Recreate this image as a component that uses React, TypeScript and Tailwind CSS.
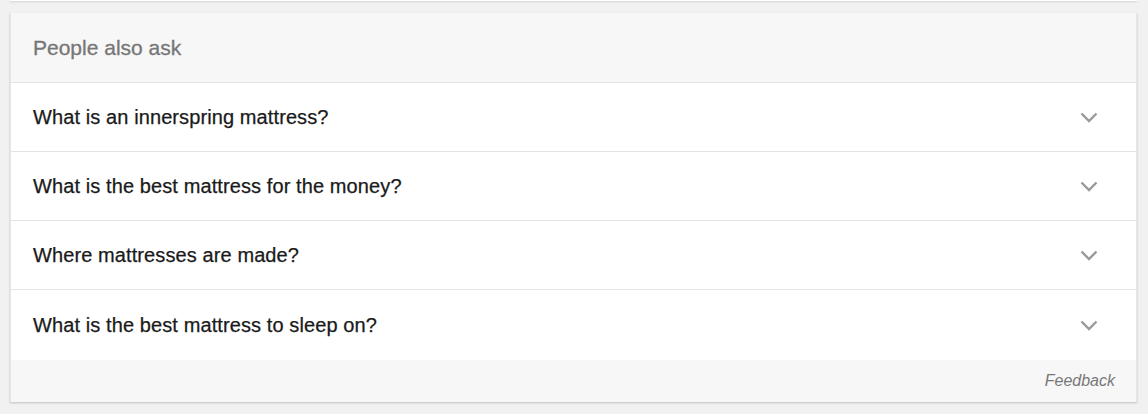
import React from "react";

const questions = [
  "What is an innerspring mattress?",
  "What is the best mattress for the money?",
  "Where mattresses are made?",
  "What is the best mattress to sleep on?",
];

function Chevron() {
  return (
    <svg width="18" height="11" viewBox="0 0 18 11" fill="none" className="shrink-0">
      <path d="M1.5 1.5 L9 9 L16.5 1.5" stroke="#999" strokeWidth="2.4" strokeLinecap="butt" strokeLinejoin="miter" />
    </svg>
  );
}

export default function App() {
  return (
    <div
      className="w-[1148px] h-[414px] bg-[#f1f1f1] pl-[10px] pr-[11px] overflow-hidden"
      style={{ fontFamily: '"Liberation Sans", Arial, sans-serif' }}
    >
      <div className="h-[1px] bg-white shadow-[0_1px_2px_rgba(0,0,0,0.18)]" />
      <div className="mt-[12px] bg-white shadow-[0_1px_2px_rgba(0,0,0,0.2)] border-l border-r border-[#e6e6e6]">
        <div className="h-[70px] bg-[#f7f7f7] border-b border-[#e3e3e3] pl-[22px] flex items-center">
          <span className="text-[21px] text-[#767676] leading-none [-webkit-text-stroke:0.3px_#767676]">
            People also ask
          </span>
        </div>
        {questions.map((q, i) => (
          <div
            key={q}
            className={
              i < questions.length - 1
                ? "h-[69px] border-b border-[#e3e3e3] pl-[22px] pr-[38px] flex items-center justify-between"
                : "h-[70px] pl-[22px] pr-[38px] flex items-center justify-between"
            }
          >
            <span className="text-[20px] tracking-[0.1px] text-[#1a1a1a] leading-none [-webkit-text-stroke:0.25px_#1a1a1a]">
              {q}
            </span>
            <Chevron />
          </div>
        ))}
        <div className="h-[42px] bg-[#f7f7f7] flex items-center justify-end pr-[21px]">
          <span className="text-[16px] italic text-[#777] leading-none">Feedback</span>
        </div>
      </div>
    </div>
  );
}
